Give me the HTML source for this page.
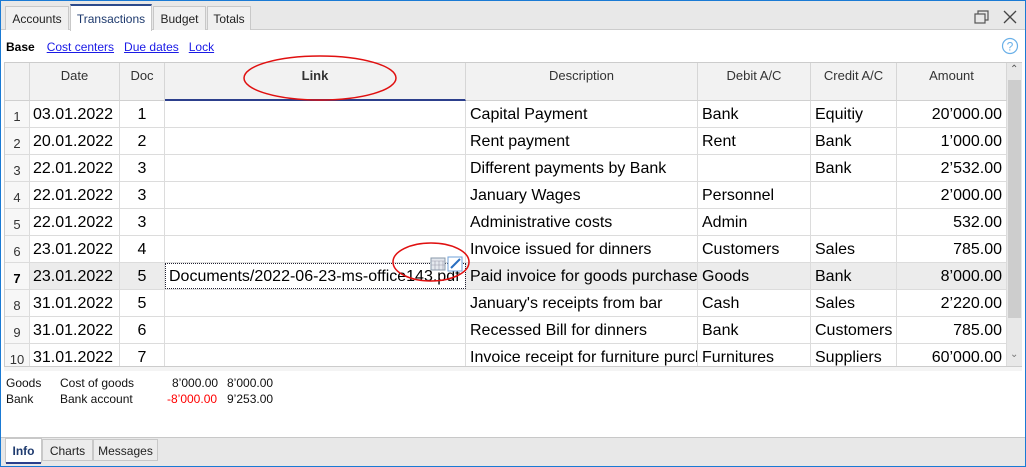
<!DOCTYPE html>
<html><head><meta charset="utf-8"><style>
*{margin:0;padding:0;box-sizing:border-box}
body{width:1026px;height:467px;overflow:hidden;background:#fff;font-family:"Liberation Sans",Arial,sans-serif;position:relative}
.abs{position:absolute}
#frame{left:0;top:0;width:1026px;height:467px;border:1px solid #1a7ad4;}
#tabbar{left:1px;top:1px;width:1024px;height:29px;background:#e8e8e8;border-bottom:1px solid #ccc}
.tab{position:absolute;top:6px;height:24px;border:1px solid #c8c8c8;border-bottom:none;background:#f0f0f0;font-size:12px;color:#222;padding:5px 0 0;text-align:center}
.tab.act{background:#fff;color:#1e3a6e;border-top:2px solid #2c4a8c;top:4px;height:27px;padding-top:6px}
.sub{top:40px;font-size:12px}
.sub a{color:#1a1ae6;text-decoration:underline;margin-right:10px}
.hdr{top:63px;height:38px;background:#f2f2f2;border-right:1px solid #d6d6d6;border-bottom:1px solid #d0d0d0;font-size:13px;color:#333;text-align:center;padding-top:5px}
.cell{position:absolute;height:27px;border-right:1px solid #dcdcdc;border-bottom:1px solid #dcdcdc;font-size:16px;color:#000;padding-top:5px;white-space:nowrap;overflow:hidden}
.rn{font-size:13px;color:#333;text-align:center;padding-top:8px;background:#f7f7f7}
.info{font-size:12px;color:#111;position:absolute}
.btab{position:absolute;top:439px;height:22px;border:1px solid #c8c8c8;background:#ececec;font-size:12px;padding-top:4px;text-align:center;color:#222}
</style></head><body>
<div id="tabbar" class="abs"></div>
<div class="tab" style="left:5px;width:64px">Accounts</div>
<div class="tab act" style="left:70px;width:82px">Transactions</div>
<div class="tab" style="left:153px;width:53px">Budget</div>
<div class="tab" style="left:207px;width:44px">Totals</div>
<svg class="abs" style="left:973px;top:9px" width="18" height="16"><rect x="2" y="5" width="10" height="9" fill="none" stroke="#555" stroke-width="1.2"/><path d="M5 5V2h10v9h-3" fill="none" stroke="#555" stroke-width="1.2"/></svg>
<svg class="abs" style="left:1003px;top:10px" width="14" height="14"><path d="M1 1L13 13M13 1L1 13" stroke="#444" stroke-width="1.3"/></svg>
<div class="abs sub" style="left:6px"><b style="margin-right:12px">Base</b><a>Cost centers</a><a>Due dates</a><a>Lock</a></div>
<svg class="abs" style="left:1001px;top:37px" width="18" height="18"><circle cx="9" cy="9" r="7.5" fill="none" stroke="#6ab0e8" stroke-width="1.2"/><text x="9" y="13.5" font-size="12" text-anchor="middle" fill="#6ab0e8" font-family="Liberation Sans">?</text></svg>
<div class="abs" style="left:4px;top:62px;width:1018px;height:1px;background:#ccc"></div>
<div class="abs" style="left:4px;top:62px;width:1px;height:305px;background:#ccc"></div>
<div class="hdr abs" style="left:5px;width:25px"></div>
<div class="hdr abs" style="left:30px;width:90px">Date</div>
<div class="hdr abs" style="left:120px;width:45px">Doc</div>
<div class="hdr abs" style="left:165px;width:301px;font-weight:bold;border-bottom:2px solid #2c3f8c">Link</div>
<div class="hdr abs" style="left:466px;width:232px">Description</div>
<div class="hdr abs" style="left:698px;width:113px">Debit A/C</div>
<div class="hdr abs" style="left:811px;width:86px">Credit A/C</div>
<div class="hdr abs" style="left:897px;width:110px">Amount</div>
<div class="abs" style="left:1007px;top:63px;width:15px;height:304px;background:#e8e8e8"></div>
<div class="abs" style="left:1008px;top:80px;width:13px;height:238px;background:#cdcdcd"></div>
<div class="abs" style="left:1010px;top:64px;font-size:10px;color:#555">&#8963;</div>
<div class="abs" style="left:1010px;top:349px;font-size:10px;color:#777">&#8964;</div>
<div id="rows"></div>
<script>
var d=[["03.01.2022","1","","Capital Payment","Bank","Equitiy","20’000.00"],
["20.01.2022","2","","Rent payment","Rent","Bank","1’000.00"],
["22.01.2022","3","","Different payments by Bank","","Bank","2’532.00"],
["22.01.2022","3","","January Wages","Personnel","","2’000.00"],
["22.01.2022","3","","Administrative costs","Admin","","532.00"],
["23.01.2022","4","","Invoice issued for dinners","Customers","Sales","785.00"],
["23.01.2022","5","Documents/2022-06-23-ms-office143.pdf","Paid invoice for goods purchase","Goods","Bank","8’000.00"],
["31.01.2022","5","","January's receipts from bar","Cash","Sales","2’220.00"],
["31.01.2022","6","","Recessed Bill for dinners","Bank","Customers","785.00"],
["31.01.2022","7","","Invoice receipt for furniture purchase","Furnitures","Suppliers","60’000.00"]];
var cols=[[30,90,"left",3],[120,45,"center",0],[165,301,"left",4],[466,232,"left",4],[698,113,"left",4],[811,86,"left",4],[897,110,"right",4]];
var h="";
for(var i=0;i<10;i++){var y=101+i*27;var h2=(i==9)?266+101-y:27;var sel=i==6;
h+='<div class="cell rn" style="left:5px;top:'+y+'px;width:25px;height:'+h2+'px;'+(sel?'font-weight:bold;color:#000':'')+'">'+(i+1)+'</div>';
for(var c=0;c<7;c++){var co=cols[c];var bg=sel?'#ececec':'#fff';if(sel&&c==2)bg='#fff';
var pad=co[2]=="right"?'padding-right:4px':'padding-left:'+co[3]+'px';
h+='<div class="cell" style="left:'+co[0]+'px;top:'+y+'px;width:'+co[1]+'px;height:'+h2+'px;text-align:'+co[2]+';background:'+bg+';'+pad+'">'+d[i][c+1-1]+'</div>';}}
document.getElementById("rows").innerHTML=h;
</script>
<div class="abs" style="left:165px;top:263px;width:301px;height:26px;border:1px dotted #223;"></div>
<svg class="abs" style="left:430px;top:254px" width="36" height="18"><rect x="1" y="4" width="14" height="12" fill="#e4e8ee" stroke="#8899aa"/><path d="M1 7h14M5 7v9M9 7v9M13 7v9M1 11h14" stroke="#99a" stroke-width="0.6"/><rect x="18" y="3" width="14" height="14" fill="#fff" stroke="#6fa0d8"/><path d="M21 14L30 5" stroke="#2a6fc0" stroke-width="2"/></svg>
<svg class="abs" style="left:0;top:0" width="1026" height="467" fill="none" stroke="#e01010" stroke-width="1.5">
<ellipse cx="320" cy="78" rx="76" ry="22"/>
<ellipse cx="431" cy="262" rx="38" ry="19"/></svg>
<div class="abs" style="left:4px;top:366px;width:1018px;height:5px;background:#f4f4f4;border-top:1px solid #ccc"></div>
<div class="info" style="left:6px;top:376px">Goods</div><div class="info" style="left:60px;top:376px">Cost of goods</div>
<div class="info" style="left:172px;top:376px">8’000.00</div><div class="info" style="left:227px;top:376px">8’000.00</div>
<div class="info" style="left:6px;top:392px">Bank</div><div class="info" style="left:60px;top:392px">Bank account</div>
<div class="info" style="left:167px;top:392px;color:#f00">-8’000.00</div><div class="info" style="left:227px;top:392px">9’253.00</div>
<div class="abs" style="left:1px;top:437px;width:1024px;height:29px;background:#e8e8e8;border-top:1px solid #c8c8c8"></div>
<div class="btab" style="left:5px;width:37px;background:#fff;border-bottom:none;height:25px;color:#1e3a6e;font-weight:bold;top:438px;padding-top:5px">Info</div>
<div class="abs" style="left:6px;top:462px;width:35px;height:2px;background:#2c3f8c"></div>
<div class="btab" style="left:42px;width:51px">Charts</div>
<div class="btab" style="left:93px;width:65px">Messages</div>
<div id="frame" class="abs"></div>
</body></html>
